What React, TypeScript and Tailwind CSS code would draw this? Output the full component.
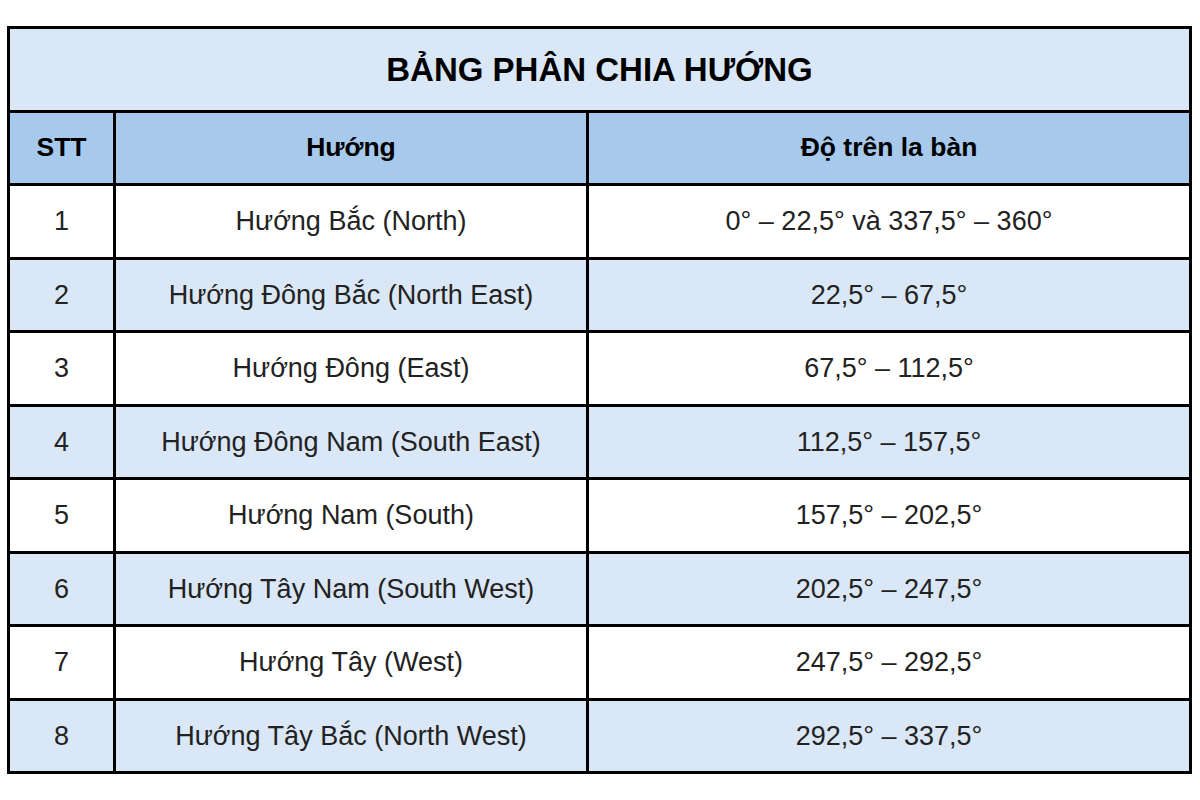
import React from "react";

const rows = [
  { stt: "1", huong: "Hướng Bắc (North)", deg: "0° – 22,5° và 337,5° – 360°" },
  { stt: "2", huong: "Hướng Đông Bắc (North East)", deg: "22,5° – 67,5°" },
  { stt: "3", huong: "Hướng Đông (East)", deg: "67,5° – 112,5°" },
  { stt: "4", huong: "Hướng Đông Nam (South East)", deg: "112,5° – 157,5°" },
  { stt: "5", huong: "Hướng Nam (South)", deg: "157,5° – 202,5°" },
  { stt: "6", huong: "Hướng Tây Nam (South West)", deg: "202,5° – 247,5°" },
  { stt: "7", huong: "Hướng Tây (West)", deg: "247,5° – 292,5°" },
  { stt: "8", huong: "Hướng Tây Bắc (North West)", deg: "292,5° – 337,5°" },
];

export default function App() {
  return (
    <div className="min-h-[800px] bg-white pt-[26px] pl-[7px] font-['Liberation_Sans',Arial,sans-serif]">
      <table className="table-fixed border-collapse w-[1185px] border-[3px] border-black">
        <colgroup>
          <col className="w-[106px]" />
          <col className="w-[473px]" />
          <col />
        </colgroup>
        <thead>
          <tr className="h-[84px] bg-[#dae7f6]">
            <th colSpan={3} className="border-[3px] border-black text-[33px] font-bold text-black text-center">
              BẢNG PHÂN CHIA HƯỚNG
            </th>
          </tr>
          <tr className="h-[73px] bg-[#a7c9eb] text-[26.5px] font-bold text-black">
            <th className="border-[3px] border-black text-center">STT</th>
            <th className="border-[3px] border-black text-center">Hướng</th>
            <th className="border-[3px] border-black text-center">Độ trên la bàn</th>
          </tr>
        </thead>
        <tbody className="text-[27px] text-[#222222]">
          {rows.map((r, i) => (
            <tr key={r.stt} className={`h-[73.5px] ${i % 2 === 1 ? "bg-[#dae7f6]" : "bg-white"}`}>
              <td className="border-[3px] border-black text-center">{r.stt}</td>
              <td className="border-[3px] border-black text-center">{r.huong}</td>
              <td className="border-[3px] border-black text-center">{r.deg}</td>
            </tr>
          ))}
        </tbody>
      </table>
    </div>
  );
}
